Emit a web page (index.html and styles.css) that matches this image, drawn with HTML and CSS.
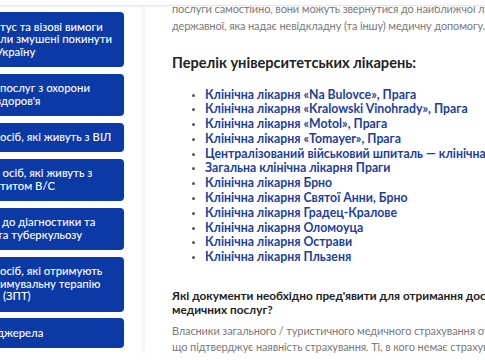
FILE: index.html
```html
<!DOCTYPE html>
<html lang="uk">
<head>
<meta charset="utf-8">
<title>Перелік університетських лікарень</title>
<link rel="stylesheet" href="styles.css">
</head>
<body>
<div class="topbar"></div>
<div class="page">
  <aside class="sidebar">
    <a class="card" href="#"><span class="ln">тус та візові вимоги</span><span class="ln">ли змушені покинути</span><span class="ln cut4">Україну</span></a>
    <a class="card" href="#"><span class="ln">послуг з охорони</span><span class="ln cut4">здоров'я</span></a>
    <a class="card" href="#"><span class="ln">осіб, які живуть з ВІЛ</span></a>
    <a class="card" href="#"><span class="ln cut3">і осіб, які живуть з</span><span class="ln">титом В/С</span></a>
    <a class="card" href="#"><span class="ln pad2">до діагностики та</span><span class="ln cut3">та туберкульозу</span></a>
    <a class="card" href="#"><span class="ln">осіб, які отримують</span><span class="ln">имувальну терапію</span><span class="ln pad3">(ЗПТ)</span></a>
    <a class="card" href="#"><span class="ln cut3">джерела</span></a>
  </aside>
  <main class="content">
    <p class="text">послуги самостійно, вони можуть звернутися до найближчої лікарні, приватної або</p>
    <p class="text">державної, яка надає невідкладну (та іншу) медичну допомогу.</p>
    <h2 class="h-main">Перелік університетських лікарень:</h2>
    <ul class="list">
      <li><a href="#">Клінічна лікарня «Na Bulovce», Прага</a></li>
      <li><a href="#">Клінічна лікарня «Kralowski Vinohrady», Прага</a></li>
      <li><a href="#">Клінічна лікарня «Motol», Прага</a></li>
      <li><a href="#">Клінічна лікарня «Tomayer», Прага</a></li>
      <li><a href="#">Централізований військовий шпиталь — клінічна лікарня, Прага</a></li>
      <li><a href="#">Загальна клінічна лікарня Праги</a></li>
      <li><a href="#">Клінічна лікарня Брно</a></li>
      <li><a href="#">Клінічна лікарня Святої Анни, Брно</a></li>
      <li><a href="#">Клінічна лікарня Градец-Кралове</a></li>
      <li><a href="#">Клінічна лікарня Оломоуца</a></li>
      <li><a href="#">Клінічна лікарня Острави</a></li>
      <li><a href="#">Клінічна лікарня Пльзеня</a></li>
    </ul>
    <h3 class="h-sub">Які документи необхідно пред'явити для отримання доступу до<br>медичних послуг?</h3>
    <p class="text">Власники загального / туристичного медичного страхування отримують картку,</p>
    <p class="text">що підтверджує наявність страхування. Ті, в кого немає страхування, мають</p>
  </main>
</div>
</body>
</html>
```
FILE: styles.css
```css
html, body {
  margin: 0;
  padding: 0;
  background: #ffffff;
  overflow: hidden;
  width: 485px;
  height: 360px;
}
body {
  font-family: "Lato", "Open Sans", sans-serif;
  position: relative;
}
.topbar {
  position: absolute;
  left: 0;
  top: 0;
  width: 100%;
  height: 5px;
  background: #ffffff;
  border-bottom: 1px solid #e8e8e8;
  box-shadow: 0 1px 3px rgba(0,0,0,0.05);
  z-index: 5;
}
.page {
  display: flex;
  width: 900px;
}
.sidebar {
  width: 145px;
  flex: none;
  padding: 12px 21px 0 0;
  box-sizing: border-box;
  display: flex;
  flex-direction: column;
  gap: 6.5px;
}
.card {
  display: block;
  background: #0b3aa6;
  color: #ffffff;
  text-decoration: none;
  border-radius: 0 4px 4px 0;
  padding: 8.5px 0 8.5px 0;
  font-size: 11.3px;
  line-height: 12.7px;
  font-weight: 500;
  overflow: hidden;
  white-space: nowrap;
}
.ln { display: block; }
.cut4 { margin-left: -4px; }
.cut3 { margin-left: -3px; }
.pad2 { padding-left: 2px; }
.pad3 { padding-left: 3px; }
.content {
  flex: none;
  width: 700px;
  padding: 0 0 0 27px;
  margin-top: 1px;
  box-shadow: -4px 0 6px -3px rgba(0,0,0,0.08);
  white-space: nowrap;
}
.text {
  margin: 0;
  font-size: 11px;
  letter-spacing: -0.12px;
  line-height: 16.5px;
  color: #7a7a7a;
}
.h-main {
  margin: 19px 0 0 0;
  font-size: 14.6px;
  line-height: 20px;
  font-weight: 700;
  color: #222222;
}
.list {
  margin: 14.5px 0 0 0;
  padding: 0 0 0 33px;
  list-style: disc;
  color: #555555;
  font-size: 12.3px;
  line-height: 14.8px;
}
.list li::marker { font-size: 9px; }
.list a {
  color: #213f99;
  font-weight: 700;
  text-decoration: none;
}
.h-sub {
  margin: 24px 0 5.5px 0;
  font-size: 11.8px;
  line-height: 14px;
  font-weight: 700;
  color: #222222;
}
```
